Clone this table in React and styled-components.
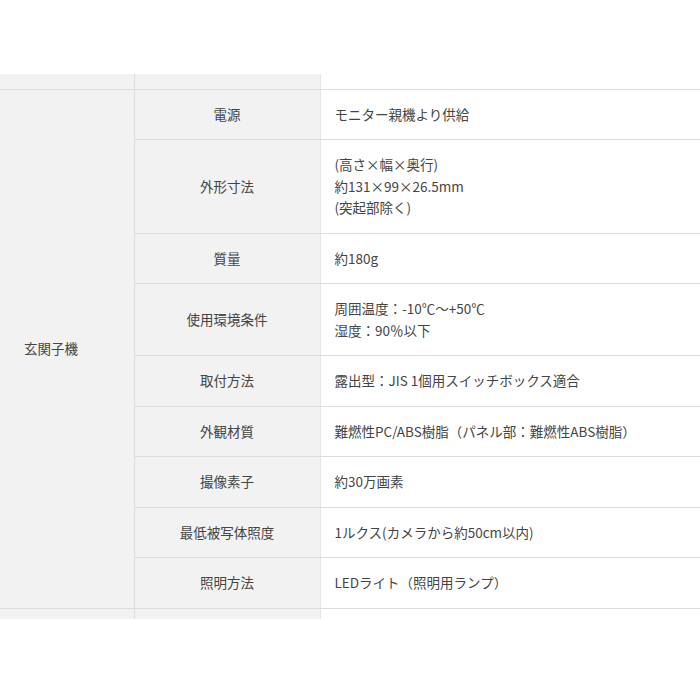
import React from 'react';
import styled, {createGlobalStyle} from 'styled-components';

const GlobalStyle = createGlobalStyle`
  body {
    margin: 0;
    background: #fff;
    font-family: "Noto Sans CJK JP", "Noto Sans", sans-serif;
    color: #444;
  }
`;

const Page = styled.div`
  padding-top: 74px;
  width: 700px;
`;

const SpecTable = styled.table`
  width: 700px;
  border-collapse: collapse;
  table-layout: fixed;
  font-size: 13.5px;
  line-height: 21.5px;
`;

const GroupCell = styled.th`
  background: #f2f2f2;
  border-right: 1px solid #dcdcdc;
  border-bottom: 1px solid #dcdcdc;
  text-align: left;
  font-weight: normal;
  padding: 0 0 0 24px;
  vertical-align: middle;
`;

const LabelCell = styled.th`
  background: #f2f2f2;
  border-bottom: 1px solid #dcdcdc;
  border-right: 1px solid #e6e6e6;
  text-align: center;
  font-weight: normal;
  padding: 14px 8px;
  vertical-align: middle;
`;

const ValueCell = styled.td`
  background: #fff;
  border-bottom: 1px solid #dcdcdc;
  padding: 14px 14px;
  vertical-align: middle;
`;

const StubRow = styled.tr`
  height: ${props => props.h}px;
  th,
  td {
    padding: 0;
    border-bottom: ${props => (props.last ? 'none' : '1px solid #dcdcdc')};
  }
`;

const specs = [
  ['電源', ['モニター親機より供給']],
  ['外形寸法', ['(高さ×幅×奥行)', '約131×99×26.5mm', '(突起部除く)']],
  ['質量', ['約180g']],
  ['使用環境条件', ['周囲温度：-10℃～+50℃', '湿度：90％以下']],
  ['取付方法', ['露出型：JIS 1個用スイッチボックス適合']],
  ['外観材質', ['難燃性PC/ABS樹脂（パネル部：難燃性ABS樹脂）']],
  ['撮像素子', ['約30万画素']],
  ['最低被写体照度', ['1ルクス(カメラから約50cm以内)']],
  ['照明方法', ['LEDライト（照明用ランプ）']],
];

const App = () => {
  return (
    <>
      <GlobalStyle />
      <Page>
        <SpecTable>
          <colgroup>
            <col style={{width: 134}} />
            <col style={{width: 186}} />
            <col />
          </colgroup>
          <tbody>
            <StubRow h={15}>
              <GroupCell />
              <LabelCell />
              <ValueCell />
            </StubRow>
            {specs.map(([label, lines], i) => (
              <tr key={label}>
                {i === 0 && (
                  <GroupCell rowSpan={specs.length}>玄関子機</GroupCell>
                )}
                <LabelCell>{label}</LabelCell>
                <ValueCell>
                  {lines.map((line, j) => (
                    <div key={j}>{line}</div>
                  ))}
                </ValueCell>
              </tr>
            ))}
            <StubRow h={11} last>
              <GroupCell />
              <LabelCell />
              <ValueCell />
            </StubRow>
          </tbody>
        </SpecTable>
      </Page>
    </>
  );
};

export default App;
